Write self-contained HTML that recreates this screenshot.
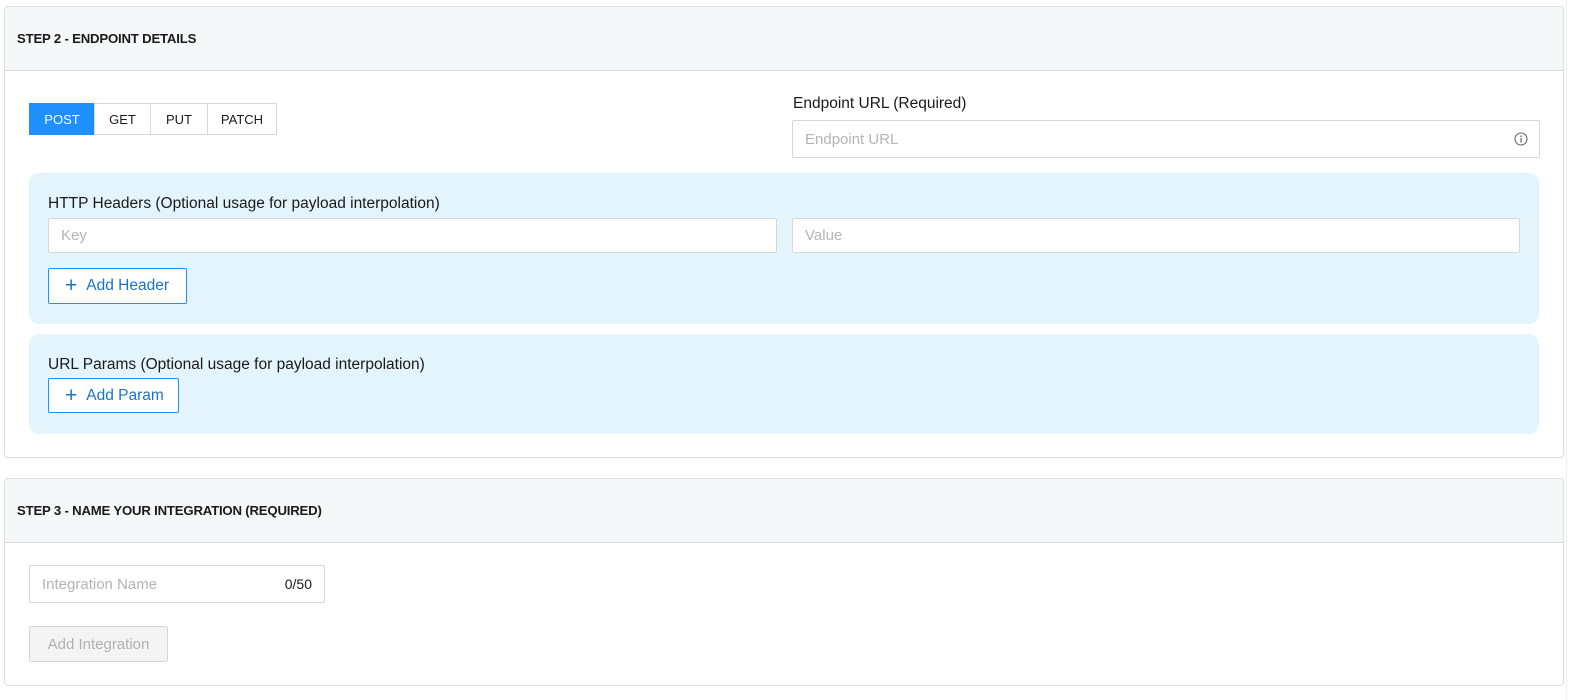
<!DOCTYPE html>
<html><head><style>
*{box-sizing:border-box;margin:0;padding:0}
body{width:1593px;height:700px;background:#fff;font-family:"Liberation Sans",sans-serif;position:relative;overflow:hidden;color:#1a1a1a}
.a{position:absolute}
.card{position:absolute;left:4px;width:1560px;border:1px solid #dcdfe3;border-radius:4px;background:#fff;overflow:hidden}
.hd{height:64px;background:#f6f7f9;border-bottom:1px solid #dcdfe3;font-size:13.2px;font-weight:bold;padding:24px 0 0 12px;letter-spacing:-0.2px}
.inp{position:absolute;border:1px solid #d6d6d6;border-radius:2px;background:#fff;font-size:15px;color:#b4b4b4;padding-left:12px;display:flex;align-items:center}
.btn{position:absolute;border:1px solid #d6d6d6;font-size:13px;display:flex;align-items:center;justify-content:center;background:#fff}
.panel{position:absolute;left:29px;width:1510px;background:#e3f4fd;border-radius:10px}
.lbl{position:absolute;font-size:15.5px;color:#1a1a1a}
.ab{position:absolute;border:1px solid #1e90ff;background:#fff;color:#1a73c8;font-size:15.5px;display:flex;align-items:center;padding-left:16px;border-radius:2px}
.ab b{font-weight:normal;font-size:21px;margin-right:9px;line-height:14px}
</style></head><body>
<div class="a" style="left:1566px;top:0;width:27px;height:700px;background:#fff;border-left:1px solid #f0f0f0"></div>
<div class="card" style="top:6px;height:452px"><div class="hd">STEP 2 - ENDPOINT DETAILS</div></div>
<div class="btn" style="left:29px;top:103px;width:66px;height:32px;background:#1e90ff;border-color:#1e90ff;color:#fff">POST</div>
<div class="btn" style="left:94px;top:103px;width:57px;height:32px">GET</div>
<div class="btn" style="left:150px;top:103px;width:58px;height:32px">PUT</div>
<div class="btn" style="left:207px;top:103px;width:70px;height:32px">PATCH</div>
<div class="lbl" style="left:793px;top:95px">Endpoint URL (Required)</div>
<div class="inp" style="left:792px;top:120px;width:748px;height:38px">Endpoint URL
<svg class="a" style="right:11px;top:11px" width="14" height="14" viewBox="0 0 14 14"><circle cx="7" cy="7" r="6" fill="none" stroke="#666" stroke-width="1.1"/><rect x="6.4" y="6" width="1.2" height="4.5" fill="#666"/><circle cx="7" cy="4.2" r=".8" fill="#666"/></svg></div>
<div class="panel" style="top:173px;height:151px"></div>
<div class="lbl" style="left:48px;top:195px">HTTP Headers (Optional usage for payload interpolation)</div>
<div class="inp" style="left:48px;top:218px;width:729px;height:35px">Key</div>
<div class="inp" style="left:792px;top:218px;width:728px;height:35px">Value</div>
<div class="ab" style="left:48px;top:268px;width:139px;height:36px"><b>+</b>Add Header</div>
<div class="panel" style="top:334px;height:100px"></div>
<div class="lbl" style="left:48px;top:356px">URL Params (Optional usage for payload interpolation)</div>
<div class="ab" style="left:48px;top:378px;width:131px;height:35px"><b>+</b>Add Param</div>
<div class="card" style="top:478px;height:208px"><div class="hd">STEP 3 - NAME YOUR INTEGRATION (REQUIRED)</div></div>
<div class="inp" style="left:29px;top:565px;width:296px;height:38px">Integration Name<span class="a" style="right:12px;color:#1a1a1a;font-size:14px">0/50</span></div>
<div class="btn" style="left:29px;top:626px;width:139px;height:36px;background:#f4f4f4;color:#b0b0b0;font-size:15px;border-radius:2px">Add Integration</div>
</body></html>
